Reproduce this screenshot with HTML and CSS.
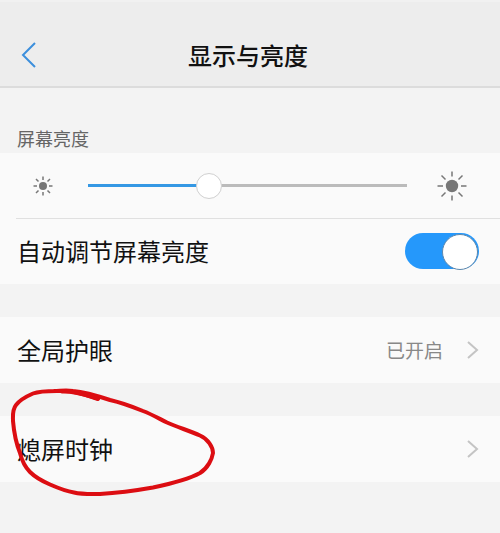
FILE: index.html
```html
<!DOCTYPE html>
<html lang="zh-CN">
<head>
<meta charset="utf-8">
<meta name="viewport" content="width=device-width, initial-scale=1">
<title>显示与亮度</title>
<link rel="stylesheet" href="styles.css">
</head>
<body>
<header class="header">
  <button class="back" type="button" aria-label="返回">
    <svg width="16" height="28" viewBox="0 0 16 28"><path d="M15 2 3 14l12 12"/></svg>
  </button>
  <h1 class="title">显示与亮度</h1>
</header>
<main>
  <label class="section-label" for="brightness">屏幕亮度</label>
  <section class="group">
    <div class="row slider-row">
      <svg class="sun" width="20" height="20" viewBox="-10 -10 20 20">
        <circle r="4"/>
        <path d="M0-9.500v3.500M0 6v3.500M-9.500 0h3.500M6 0h3.500M-7-7l2.500 2.500M4.500 4.500 7 7M-7 7l2.500-2.500M4.500-4.500 7-7"/>
      </svg>
      <input class="slider" id="brightness" type="range" min="0" max="100" value="37">
      <svg class="sun" width="30" height="30" viewBox="-15 -15 30 30">
        <circle r="6.200"/>
        <path d="M0-14.500v5M0 9.500v5M-14.500 0h5.500M9 0h5.500M-10.500-10.500l4 4M6.500 6.500l4 4M-10.500 10.500l4-4M6.500-6.500l4-4"/>
      </svg>
    </div>
    <div class="row divided">
      <label class="name" for="auto">自动调节屏幕亮度</label>
      <input class="switch" id="auto" type="checkbox" role="switch" checked>
    </div>
  </section>
  <a class="row group" href="#eye-care">
    <span class="name">全局护眼</span>
    <span class="value">已开启</span>
    <svg class="chevron" width="12" height="20" viewBox="0 0 12 20"><path d="m1 2 9 8-9 8"/></svg>
  </a>
  <a class="row group marked" href="#clock">
    <span class="name">熄屏时钟</span>
    <svg class="chevron" width="12" height="20" viewBox="0 0 12 20"><path d="m1 2 9 8-9 8"/></svg>
    <svg class="mark" width="220" height="120" viewBox="0 385 220 120" aria-hidden="true">
      <path d="M98 399C88 396 78 391.500 66 391C56 391 42 390 33 393.500C25 397 19 401 16 405C12 410 13 416 13 421C14 433 16 443 20 453C22 461 25 467 30 472C35 477 42 481 50 484.500C58 488 65 491 74 492.500C82 494.500 92 494 100 494C118 493 136 490.500 153 487.500C172 483.500 189 479 200 473C208 468 212 459 213 453C213 447 208 439 200 435.500C190 431 177 427 167 422.500C158 418 151 414 143 411C132 406.500 121 402.500 110 400C98 396 85 392 73 391C66 390 60 391 54 391"/>
      <path d="M62 391.500C76 391 88 395.500 98 398.500"/>
    </svg>
  </a>
</main>
</body>
</html>
```
FILE: styles.css
```css
* {
  box-sizing: border-box;
}

body {
  margin: 0;
  background: #f3f3f3;
  color: #111;
  font-family: "Noto Sans CJK SC", sans-serif;
  font-size: 24px;
  line-height: 32px;
}

.header {
  display: grid;
  grid-template-columns: 1fr auto 1fr;
  align-items: center;
  height: 88px;
  padding: 22px 20px 0 16px;
  background: #ededed;
  border-top: 2px solid #f1f1f1;
  border-bottom: 2px solid #dcdcdc;
}

.back {
  display: flex;
  justify-self: start;
  padding: 4px;
  border: 0;
  background: none;
}

.back svg {
  fill: none;
  stroke: #3c8fdc;
  stroke-width: 2;
}

.title {
  margin: 0;
  font-size: 24px;
  font-weight: 500;
}

.section-label {
  display: block;
  padding: 38px 17px 3px;
  color: #666;
  font-size: 18px;
  line-height: 24px;
}

.group {
  margin-bottom: 33px;
  background: #fafafa;
}

.row {
  display: flex;
  align-items: center;
  height: 66px;
  padding: 0 21px 0 17px;
  color: inherit;
  text-decoration: none;
}

.slider-row {
  height: 65px;
  padding: 0 33px;
}

.sun {
  flex: none;
  fill: #777;
  stroke: #777;
  stroke-width: 1.500;
}

.sun path {
  fill: none;
}

.sun circle {
  stroke: none;
}

.slider {
  flex: 1;
  min-width: 0;
  height: 26px;
  margin: 0 30px 0 35px;
  appearance: none;
  background: linear-gradient(90deg, #3598e4 38%, #bbb 38%) center / 100% 3px no-repeat;
}

.slider::-webkit-slider-thumb {
  width: 26px;
  height: 26px;
  appearance: none;
  border: 1px solid #d0d0d0;
  border-radius: 50%;
  background: #fff;
}

.divided {
  position: relative;
}

.divided::before {
  position: absolute;
  top: 0;
  right: 0;
  left: 16px;
  border-top: 1px solid #e0e0e0;
  content: "";
}

.name {
  flex: 1;
}

.switch {
  display: flex;
  justify-content: flex-end;
  width: 74px;
  height: 36px;
  margin: 0;
  padding: 1px;
  appearance: none;
  border-radius: 18px;
  background: #2598fb;
}

.switch::before {
  width: 34px;
  height: 34px;
  border: 1px solid #5c87ad;
  border-radius: 50%;
  background: #fff;
  content: "";
}

.switch:not(:checked) {
  justify-content: flex-start;
  background: #ccc;
}

.value {
  margin-right: 24px;
  color: #888;
  font-size: 19px;
}

.chevron {
  fill: none;
  stroke: #c4c4c4;
  stroke-width: 2;
}

.marked {
  position: relative;
}

.mark {
  position: absolute;
  top: -31px;
  left: 0;
  fill: none;
  stroke: #dc0d12;
  stroke-linecap: round;
  stroke-linejoin: round;
  stroke-width: 4;
}
```
